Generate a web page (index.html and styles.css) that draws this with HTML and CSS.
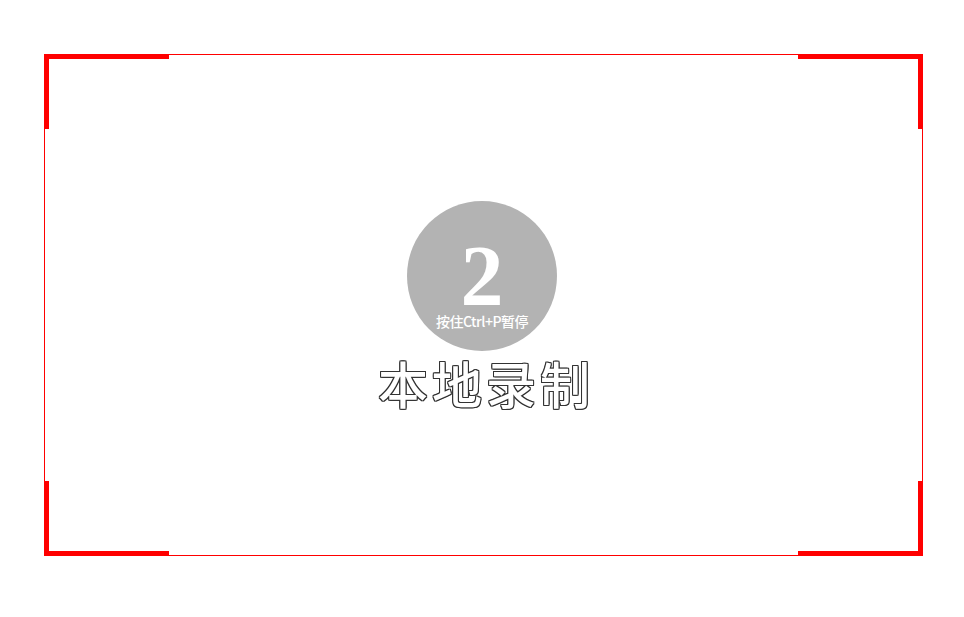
FILE: index.html
```html
<!DOCTYPE html>
<html lang="zh">
<head>
<meta charset="utf-8">
<link rel="stylesheet" href="styles.css">
</head>
<body>
<div class="frame">
  <span class="corner tl"></span>
  <span class="corner tr"></span>
  <span class="corner bl"></span>
  <span class="corner br"></span>
  <div class="center">
    <div class="badge">
      <div class="num">2</div>
      <div class="hint">按住Ctrl+P暂停</div>
    </div>
    <div class="title">本地录制</div>
  </div>
</div>
</body>
</html>
```
FILE: styles.css
```css
html, body {
  margin: 0;
  padding: 0;
  background: #ffffff;
}
body {
  width: 964px;
  height: 617px;
  overflow: hidden;
  padding-top: 54px;
  box-sizing: border-box;
}
.frame {
  position: relative;
  margin-left: 44px;
  width: 879px;
  height: 502px;
  box-sizing: border-box;
  border: 1px solid #ff0000;
}
.corner {
  position: absolute;
  width: 125px;
  height: 75px;
  box-sizing: border-box;
  border: 0 solid #ff0000;
}
.tl { left: -1px; top: -1px; border-left-width: 5px; border-top-width: 5px; }
.tr { right: -1px; top: -1px; border-right-width: 5px; border-top-width: 5px; }
.bl { left: -1px; bottom: -1px; border-left-width: 5px; border-bottom-width: 5px; }
.br { right: -1px; bottom: -1px; border-right-width: 5px; border-bottom-width: 5px; }
.center {
  display: flex;
  flex-direction: column;
  align-items: center;
  padding-top: 146px;
  margin-left: -3px;
}
.badge {
  width: 150px;
  height: 150px;
  border-radius: 50%;
  background: #b3b3b3;
  display: flex;
  flex-direction: column;
  align-items: center;
  color: #ffffff;
}
.num {
  font-family: "Liberation Serif", serif;
  font-weight: bold;
  font-size: 86px;
  line-height: 68px;
  margin-top: 41px;
}
.hint {
  font-family: "Noto Sans CJK SC", "Noto Sans", sans-serif;
  font-weight: 500;
  font-size: 14px;
  line-height: 16px;
  margin-top: 3px;
  letter-spacing: -0.5px;
}
.title {
  font-family: "Noto Sans CJK SC", sans-serif;
  font-weight: 500;
  font-size: 50px;
  line-height: 54px;
  margin-top: 4px;
  color: #ffffff;
  letter-spacing: 4px;
  text-indent: 8px;
  text-shadow:
    1px 0 0 #333, -1px 0 0 #333, 0 1px 0 #333, 0 -1px 0 #333,
    1px 1px 0 #333, -1px -1px 0 #333, 1px -1px 0 #333, -1px 1px 0 #333;
}
```
